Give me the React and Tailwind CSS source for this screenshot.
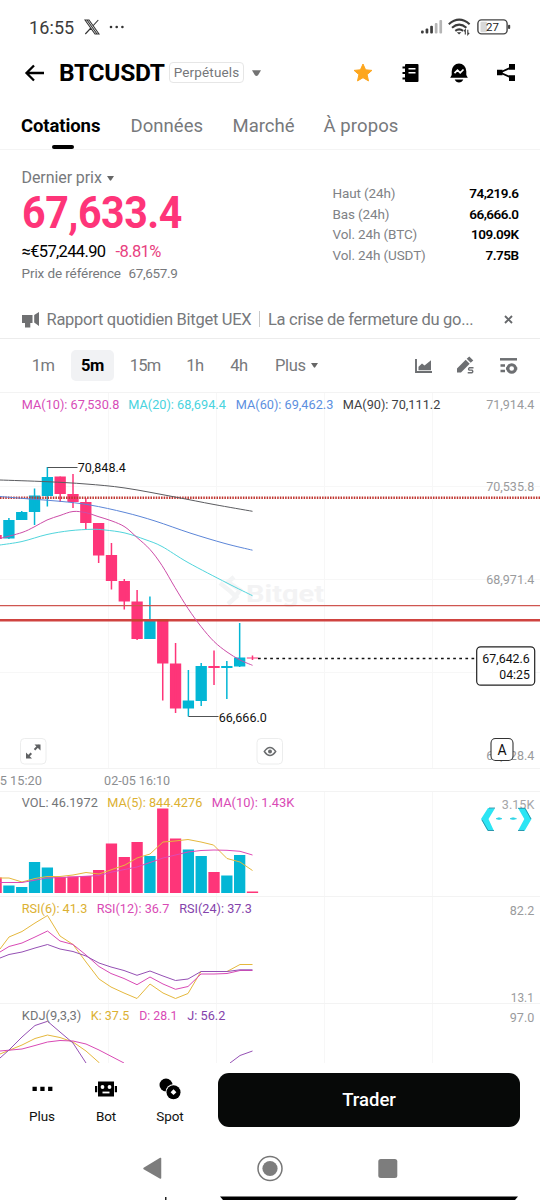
import React from "react";

const PINK = "#fe3579";
const CYAN = "#03b6d5";

// [open/close top, bottom, wick top, wick bottom, rising, volume top]
const candles = [
  [535, 539, 535, 539, 0, 877.5],
  [520, 538.5, 518, 539, 1, 885.5],
  [512, 520, 511, 520, 1, 887],
  [495.5, 512, 488.5, 525, 1, 862],
  [477, 496, 467, 506.5, 1, 867.5],
  [476.5, 494, 476.5, 502, 0, 877],
  [494, 502, 474, 508, 0, 876.5],
  [502, 523, 498, 529, 0, 876],
  [523, 555.5, 523, 563, 0, 870],
  [555, 581, 543, 589.5, 0, 843.5],
  [581, 601.5, 579, 609.5, 0, 857],
  [601.5, 639, 590, 640, 0, 842],
  [620.5, 639, 596.5, 639, 1, 856],
  [620.5, 663.5, 620.5, 700.5, 0, 808.5],
  [663.5, 708.5, 643, 713, 0, 838.5],
  [700.5, 708.5, 670, 716.5, 1, 849.5],
  [666, 701, 663, 706, 1, 856],
  [666, 668, 650.5, 685, 0, 872],
  [666, 668, 661, 699, 1, 875.5],
  [657.5, 666.5, 623, 667, 1, 855],
  [657.5, 658.5, 655.5, 660, 0, 891.5],
];
const cx = (i) => 8.9 + 12.82 * (i - 1);

function smooth(pts) {
  const p = pts.split(" ").map((s) => s.split(",").map(Number));
  let d = `M${p[0]}`;
  for (let i = 0; i < p.length - 1; i++) {
    const a = p[i - 1] || p[i];
    const b = p[i];
    const c = p[i + 1];
    const e = p[i + 2] || c;
    d += `C${b[0] + (c[0] - a[0]) / 6},${b[1] + (c[1] - a[1]) / 6} ${c[0] - (e[0] - b[0]) / 6},${c[1] - (e[1] - b[1]) / 6} ${c}`;
  }
  return d;
}

function Curve({ pts, color }) {
  return <path d={smooth(pts)} fill="none" stroke={color} strokeWidth="1" />;
}
function Line({ pts, color }) {
  return <polyline points={pts} fill="none" stroke={color} strokeWidth="1" strokeLinejoin="round" />;
}
function Label({ x, y, w, color, children, size = 13.5 }) {
  return (
    <text x={x - 0.2} y={y} textLength={w} lengthAdjust="spacingAndGlyphs" fontSize={size} fill={color}>
      {children}
    </text>
  );
}
function Pane({ top, height, children }) {
  return (
    <svg className="block w-full shrink-0" viewBox={`0 ${top} 540 ${height}`} width="540" height={height}>
      <g stroke="#f7f7f7" strokeWidth="1">
        <path d={`M108.5 ${top}v${height}M216.5 ${top}v${height}M324.5 ${top}v${height}M432.5 ${top}v${height}`} />
        <path d={`M0 ${top + 0.5}H540`} stroke="#f3f3f3" />
      </g>
      {children}
    </svg>
  );
}

function StatusBar() {
  return (
    <div className="flex h-[50px] items-center pt-1 pl-[29px] pr-[28px] text-[#3c3c3c]">
      <span className="w-[55px] text-[18px] tracking-[0.1px]">16:55</span>
      <svg width="16" height="16" viewBox="0 0 16 16" fill="none" stroke="#333" strokeWidth="1.1">
        <path d="M1 1h4l10 14h-4zM14.3 1L8.8 7M6.9 9L1.3 15M3 1l10 14" />
      </svg>
      <svg className="ml-[9px]" width="16" height="4" viewBox="0 0 16 4" fill="#333">
        <circle cx="2" cy="2" r="1.3" /><circle cx="7.7" cy="2" r="1.3" /><circle cx="13.4" cy="2" r="1.3" />
      </svg>
      <svg className="ml-auto" width="22" height="14" viewBox="0 0 22 14">
        <g fill="#3c3c3c"><rect x="0" y="10.5" width="2.7" height="3" rx="1" /><rect x="4.6" y="8.5" width="2.7" height="5" rx="1" /><rect x="9.2" y="5.8" width="2.7" height="7.7" rx="1" /></g>
        <g fill="#b5b5b5"><rect x="13.8" y="3" width="2.7" height="10.5" rx="1" /><rect x="18.4" y="0" width="2.7" height="13.5" rx="1" /></g>
      </svg>
      <svg className="ml-[5px]" width="23" height="18" viewBox="0 0 23 18" fill="none" stroke="#3c3c3c" strokeWidth="2.1">
        <path d="M.8 6.2Q11.2-2.8 21.6 6.2M4 9.7q7.2-6 14.4 0M7.3 12.8q3.9-2.8 7.8 0" />
        <path d="M8.8 14.3h4.6l-2.3 2.3z" fill="#3c3c3c" stroke="none" />
        <path d="M17.3 16.5v-4.8l-1.4 1.7M19.8 11.7v4.8l1.4-1.7" strokeWidth="1.1" />
      </svg>
      <svg className="ml-[6px] mr-px" width="34" height="16" viewBox="0 0 34 16">
        <rect x="3.5" y="2.8" width="6.5" height="10.4" rx="1" fill="#d8d8d8" />
        <rect x=".9" y=".9" width="29.2" height="14" rx="3.6" fill="none" stroke="#444" strokeWidth="1.4" />
        <rect x="31" y="5.7" width="2.2" height="4.3" rx="1" fill="#444" />
        <text x="15.5" y="12" textAnchor="middle" fontSize="11.5" fill="#222">27</text>
      </svg>
    </div>
  );
}

function Header() {
  return (
    <div className="flex h-12 items-center pl-6 pr-[23px] pb-[3px]">
      <svg width="21" height="18" viewBox="0 0 21 18" fill="none" stroke="#000" strokeWidth="2.3">
        <path d="M20 9H3M10 1.5L2.5 9l7.5 7.5" />
      </svg>
      <span className="ml-[14px] w-[110px] pt-0.5 text-[24.5px] font-bold leading-none tracking-[-0.3px] text-black">BTCUSDT</span>
      <span className="flex h-[21px] w-[75px] items-center justify-center rounded-[4px] border border-[#e6e6e6] text-[13.5px] tracking-[0.15px] text-[#75777a]">Perpétuels</span>
      <svg className="ml-[8px]" width="9" height="6" viewBox="0 0 9 6" fill="#737373"><path d="M0 .3h9L6.2 5Q4.5 6.8 2.8 5z" /></svg>
      <svg className="ml-auto" width="20" height="20" viewBox="0 0 20 20" fill="#fda61d" stroke="#fda61d" strokeWidth="1" strokeLinejoin="round">
        <path d="M10 1l2.6 5.8 6.3.6-4.8 4.2 1.4 6.3L10 14.7l-5.500 3.2 1.4-6.3L1.1 7.4l6.3-.6z" />
      </svg>
      <svg className="ml-[28px]" width="19" height="20" viewBox="0 0 19 20">
        <rect x="4" y="1" width="13.5" height="18" rx="1" fill="#000" />
        <path d="M1.5 4.5h4M1.5 10h4M1.5 15.5h4" stroke="#000" strokeWidth="2" />
        <path d="M7.5 5.8h7M7.5 9.8h7" stroke="#fff" strokeWidth="1.6" />
      </svg>
      <svg className="ml-[29px]" width="20" height="20" viewBox="0 0 20 20">
        <path d="M2.7 12V8.3a7.3 7.8 0 0 1 14.6 0V12l1.5 2.8H1.2zM5.7 16.6h8.6q-1.3 3-4.3 3t-4.3-3z" fill="#000" />
        <path d="M5.5 10.2l3-3 2.7 2.6 3.3-3.3" fill="none" stroke="#fff" strokeWidth="1.7" />
      </svg>
      <svg className="ml-[27px] mr-px" width="20" height="19" viewBox="0 0 20 19">
        <path d="M16 4L4 9.5 16 15" fill="none" stroke="#000" strokeWidth="1.8" />
        <path d="M1 6.7h5.5v5.5H1zM13 1h6v5.8h-6zM13 12.3h6V18h-6z" fill="#000" />
      </svg>
    </div>
  );
}

function Tabs() {
  return (
    <div className="relative flex h-[52px] border-b border-[#f4f4f4] pl-[21px] pt-[14px] text-[18.5px] leading-[28px] text-[#77797c]">
      <div className="w-[109.5px] font-bold tracking-[-0.1px] text-black">Cotations</div>
      <div className="w-[102px] tracking-[0.05px]">Données</div>
      <div className="w-[91px]">Marché</div>
      <div className="tracking-[0.1px]">À propos</div>
      <div className="absolute bottom-0 left-[52px] h-1 w-[22px] rounded-[2px] bg-black" />
    </div>
  );
}

const stats = [
  ["Haut (24h)", "74,219.6"],
  ["Bas (24h)", "66,666.0"],
  ["Vol. 24h (BTC)", "109.09K"],
  ["Vol. 24h (USDT)", "7.75B"],
];

function PriceBlock() {
  return (
    <div className="flex h-[150px] pl-[21.5px] pr-[21.5px]">
      <div className="flex-1 text-[#77797c]">
        <div className="mt-[18px] flex h-5 items-center gap-[5px] text-[16px] tracking-[-0.08px]">
          Dernier prix
          <svg width="7" height="5" viewBox="0 0 7 5" fill="#666"><path d="M0 0h7L4.2 4.3q-.7.8-1.4 0z" /></svg>
        </div>
        <div className="mt-[6px] h-[38px] origin-left scale-x-[0.935] whitespace-nowrap text-[44px] font-bold leading-[38px] tracking-[-0.5px] text-[#fe3579]">67,633.4</div>
        <div className="mt-[10px] flex h-5 items-center text-[16.5px] text-black">
          <span className="w-[94px] tracking-[-0.65px]">≈€57,244.90</span>
          <span className="tracking-[-0.6px] text-[#e84180]">-8.81%</span>
        </div>
        <div className="mt-px flex h-5 items-center text-[13.5px]">
          <span className="w-[107px] tracking-[-0.1px]">Prix de référence</span>
          <span className="tracking-[-0.35px]">67,657.9</span>
        </div>
      </div>
      <div className="mt-[32.5px] w-[186px]">
        {stats.map(([k, v]) => (
          <div key={k} className="flex h-[20.8px] items-center justify-between text-[13.5px]">
            <span className="tracking-[-0.12px] text-[#808286]">{k}</span>
            <span className="text-[13.5px] font-semibold tracking-[-0.5px] text-black">{v}</span>
          </div>
        ))}
      </div>
    </div>
  );
}

function News() {
  return (
    <div className="flex h-[39px] items-center border-b border-[#ececec] pl-[22px] pt-[2px] text-[16.5px] text-[#77797c]">
      <svg width="18" height="17" viewBox="0 0 18 17" fill="#6f7072">
        <path d="M0 3h10.5v8H8.3v4.5H3V11H0zM12.2 3L17 0v14l-4.8-3.5z" />
      </svg>
      <span className="ml-[6.5px] w-[206px] whitespace-nowrap tracking-[-0.28px]">Rapport quotidien Bitget UEX</span>
      <span className="ml-[6px] mb-0.5 h-4 w-px bg-[#c9c9c9]" />
      <span className="ml-[8.5px] w-[207px] whitespace-nowrap tracking-[-0.28px]">La crise de fermeture du go...</span>
      <svg className="mb-0.5 ml-[29px]" width="9" height="9" viewBox="0 0 9 9" stroke="#66686b" strokeWidth="1.9"><path d="M1 1l7 7M8 1L1 8" /></svg>
    </div>
  );
}

function Timeframes() {
  return (
    <div className="flex h-[53px] items-center pl-[21px] text-[16.5px] text-[#77797c]">
      <span className="w-[44px] pt-[2px] text-center tracking-[-0.5px]">1m</span>
      <span className="ml-[6px] flex h-[31px] w-[43px] items-center justify-center rounded-[5px] bg-[#f1f2f4] pt-0.5 font-bold tracking-[-0.4px] text-black">5m</span>
      <span className="ml-[8px] w-[46px] pt-[2px] text-center tracking-[-0.8px]">15m</span>
      <span className="ml-[11px] w-[32px] pt-[2px] text-center tracking-[-0.4px]">1h</span>
      <span className="ml-[12px] w-[32px] pt-[2px] text-center tracking-[-0.4px]">4h</span>
      <span className="ml-[20px] w-[31px] pt-[2px] tracking-[-0.3px]">Plus</span>
      <svg className="ml-[5px]" width="7" height="5" viewBox="0 0 7 5" fill="#666"><path d="M0 0h7L4.2 4.3q-.7.8-1.4 0z" /></svg>
      <svg className="ml-[97px]" width="18" height="16" viewBox="0 0 18 16" fill="#6d6f72">
        <path d="M1 1v13h16" fill="none" stroke="#6d6f72" strokeWidth="1.9" />
        <path d="M3.5 12.3V8.8L7 5.5 9.5 7.5 16 2.2v10.1z" />
      </svg>
      <svg className="ml-[23px]" width="20" height="19" viewBox="0 0 20 19" fill="#6d6f72">
        <path d="M1 12.5L9.700 3.8l4 4L5 16.5H1zM10.7 2.8L13.3.4l4 4-2.6 2.4z" />
        <path d="M17.5 11.7h-4.2q-1.5 1.3 0 2.4h2.7q1.6 1.3 0 2.6h-4.3" fill="none" stroke="#6d6f72" strokeWidth="1.4" />
      </svg>
      <svg className="ml-[23px]" width="19" height="18" viewBox="0 0 19 18" fill="none" stroke="#6d6f72">
        <path d="M1 2.3h17" strokeWidth="2.5" /><path d="M1.5 8.5H6M1.5 14H6" strokeWidth="2.3" />
        <circle cx="12.7" cy="11.5" r="3.8" strokeWidth="3" /><path d="M7 11.5h1.5M17 11.5h1.3" strokeWidth="2.6" />
      </svg>
    </div>
  );
}

function MainChart() {
  return (
    <Pane top={392} height={376}>
      <path d="M0 486.5H540M0 579.5H540M0 672.5H540" stroke="#f7f7f7" />
      <g stroke="#f3f4f5" fill="none" strokeWidth="4.5"><path d="M220 583l10 8 6 6-8 7M234 577l-6 5 12 8-6 8" /></g>
      <text x="246" y="602" textLength="78" lengthAdjust="spacingAndGlyphs" fontSize="24" fontWeight="bold" fill="#f3f3f4">Bitget</text>
      {candles.map(([a, b, c, d, up], i) => (
        <g key={i} fill={up ? CYAN : PINK}>
          <rect x={cx(i) - 5.65} y={a} width="11.3" height={b - a} />
          <rect x={cx(i) - 0.75} y={c} width="1.5" height={d - c} />
        </g>
      ))}
      <path d="M0 497.7H540" stroke="#c03630" strokeWidth="2.4" strokeDasharray="1.5 1.14" />
      <path d="M0 605.7H540" stroke="#cf5650" strokeWidth="1.2" />
      <path d="M0 620.2H540" stroke="#cf4340" strokeWidth="2.5" />
      <path d="M132 620.2h10.5M157.5 620.2h11" stroke="#c8442d" strokeWidth="2" />
      <Curve color="#5b5c60" pts="0,480 47,481.7 86,484 125,488 175,497 214,504.5 252.5,511.3" />
      <Curve color="#5c86d8" pts="0,496.5 30,499 60,501.3 90,505 125,512.5 155,521 190,533 225,543.5 252.5,550.2" />
      <Curve color="#50d5dc" pts="0,545 22,541.5 47,534.5 70,530.7 92,529.3 105,530 125,533 145,539.5 162,546.5 188,562.5 227,583 252.5,595.7" />
      <Curve color="#cd4da8" pts="0,538.5 22,532.5 34,527 47,520 60,515.5 73,511.5 86,512.7 98,516.5 112,521 125,527 137,537.5 150,549.5 162,565.5 175,587.5 188,608.5 201,626.5 214,641.5 227,652 240,660 252.5,665.3" />
      <path d="M47.5 467.5H77.5M188.5 716.5H218.5" stroke="#505254" />
      <Label x={78} y={472} w={48} color="#111">70,848.4</Label>
      <Label x={219} y={721.5} w={48} color="#111">66,666.0</Label>
      <path d="M258 658.5H475" stroke="#111" strokeWidth="1.5" strokeDasharray="2.7 3.4" />
      <Label x={22} y={409} w={97.5} color="#d74cb7">MA(10): 67,530.8</Label>
      <Label x={128.5} y={409} w={97.5} color="#49d3de">MA(20): 68,694.4</Label>
      <Label x={236} y={409} w={97.5} color="#5c8fe0">MA(60): 69,462.3</Label>
      <Label x={343} y={409} w={97.5} color="#3e4044">MA(90): 70,111.2</Label>
      <Label x={486.5} y={409} w={48} color="#9a9b9d">71,914.4</Label>
      <Label x={486.5} y={491} w={48} color="#9a9b9d">70,535.8</Label>
      <Label x={486.5} y={584} w={48} color="#9a9b9d">68,971.4</Label>
      <Label x={486.5} y={759.5} w={48} color="#9a9b9d">66,028.4</Label>
      <rect x="476.7" y="646.8" width="58" height="38.4" rx="4" fill="#fff" stroke="#222" strokeWidth="1.2" />
      <Label x={482.5} y={663} w={47.5} color="#111">67,642.6</Label>
      <Label x={499.5} y={679.3} w={30.5} color="#111">04:25</Label>
      <rect x="491" y="738.5" width="22" height="22" rx="4.5" fill="#fff" stroke="#333" strokeWidth="1.1" />
      <text x="502" y="755" textAnchor="middle" fontSize="14" fill="#111">A</text>
      <rect x="20.5" y="738.5" width="25.5" height="25.5" rx="4" fill="#fff" stroke="#eceded" />
      <path d="M34.5 749.7l4.5-4.5M31.3 753.3l-4 4" stroke="#5f6163" strokeWidth="2" />
      <path d="M34.5 744.5h6v6zM26 752.5v6h6z" fill="#5f6163" />
      <rect x="257" y="738.5" width="25.5" height="25.5" rx="4" fill="#fff" stroke="#eceded" />
      <path d="M264.3 751.5q5.6-8 11.4 0-5.8 8-11.4 0z" fill="none" stroke="#6a6c6e" strokeWidth="1.4" />
      <circle cx="270" cy="751.5" r="2" fill="#6a6c6e" />
    </Pane>
  );
}

function TimeAxis() {
  return (
    <div className="h-[23px] shrink-0 border-t border-[#f3f3f3]">
      <svg className="block" width="540" height="22" viewBox="0 769 540 22">
        <Label x={0} y={784.7} w={42} color="#8c8e91">5 15:20</Label>
        <Label x={104.3} y={784.7} w={66} color="#8c8e91">02-05 16:10</Label>
      </svg>
    </div>
  );
}

function Volume() {
  return (
    <Pane top={791} height={105}>
      {candles.map((c, i) => (
        <rect key={i} x={cx(i) - 5.65} y={c[5]} width="11.3" height={893 - c[5]} fill={c[4] ? CYAN : PINK} />
      ))}
      <Line color="#e5b83d" pts="0,878 9,878 22,882 35,878.5 47,876.5 60,876.5 73,875 86,872.5 99,874 125,865 137,858 150,854 163,842 175,841 188,839.5 201,842 213.5,845 227,858.5 240,862 252.5,870.5" />
      <Line color="#df49b6" pts="0,882.5 22,882.5 47,878 73,877 99,875.5 112,872 137,867 163,858 188,852 201,850.5 214,850 227,850.3 240,851.3 252.5,855" />
      <Label x={22} y={807} w={76} color="#737578">VOL: 46.1972</Label>
      <Label x={107.5} y={807} w={95} color="#dcb132">MA(5): 844.4276</Label>
      <Label x={212} y={807} w={82.5} color="#d94ab5">MA(10): 1.43K</Label>
      <Label x={502} y={809} w={32.5} color="#a4a5a7">3.15K</Label>
      <path d="M488 808l7 .3-6.5 10.7 5.5 12-6.5-.3-6.5-11.7z" fill="#2ce5f4" />
      <path d="M518 808l7.5.2 6 10.8-7 12-6.5-.3 6.3-11.7z" fill="#2ce5f4" />
      <path d="M489 808h6M482 820l6 10.5h6M518 808.3h7l6 10.7M518 830.5h6" fill="none" stroke="#27849a" strokeWidth=".8" />
      <path d="M496 818.7q3-2 6 0-3 1.6-6 0zM510 818.7q3-2 6.5 0-3.5 1.6-6.5 0z" fill="#31d4e6" stroke="#31d4e6" strokeWidth=".7" />
    </Pane>
  );
}

function Rsi() {
  return (
    <Pane top={896} height={107}>
      <Line color="#e5b83d" pts="0,949 9,937 22,931.5 35,923 47.5,915.5 60,936 73,944.5 86,962 99,979 111,987 124,993 137,998.5 150,984 163,993 175.5,998.5 188,993.5 201,971.5 227,971.5 240,964.5 252.5,964.5" />
      <Line color="#d94ab5" pts="0,952 9,946.5 22,943 35,937 47.5,931 60,941 73,944.5 86,955 99,966.5 111,973.5 124,978.5 137,984.7 150,977 163,984 175.5,989.3 188,986.5 201,974 214,974 227,973.5 240,970.5 252.5,970.5" />
      <Line color="#9550b4" pts="0,958 9,954.5 22,952 35,948 47.5,944.5 60,949 73,951.5 86,956 99,963 111,967 124,970.5 137,975.3 150,971 163,976 175.5,980.5 188,979 201,971.5 227,971.5 240,969.8 252.5,969.8" />
      <Label x={22} y={913} w={65.5} color="#dcb132">RSI(6): 41.3</Label>
      <Label x={97} y={913} w={72.5} color="#d94ab5">RSI(12): 36.7</Label>
      <Label x={179.5} y={913} w={72.5} color="#8443ab">RSI(24): 37.3</Label>
      <Label x={510} y={915} w={24.5} color="#9a9b9d">82.2</Label>
      <Label x={511} y={1002} w={23} color="#9a9b9d" size={13}>13.1</Label>
    </Pane>
  );
}

function Kdj() {
  return (
    <Pane top={1003} height={60}>
      <Line color="#e5b83d" pts="0,1054 22,1045 35,1038.5 47.5,1035 60,1037.5 73,1042 86,1051 99.5,1063" />
      <Line color="#d94ab5" pts="0,1051 22,1049 35,1045.5 47.5,1042 60,1040.5 73,1041 86,1044 99,1050 124,1063" />
      <Line color="#9550b4" pts="0,1058 9,1050 22,1037 35,1025.5 47.5,1021.3 60,1032 73,1043 86,1063" />
      <Line color="#9550b4" pts="230,1063 240,1055.5 252.5,1051" />
      <Label x={22} y={1019.5} w={59.5} color="#737578">KDJ(9,3,3)</Label>
      <Label x={91} y={1019.5} w={38.5} color="#dcb132">K: 37.5</Label>
      <Label x={139.5} y={1019.5} w={38} color="#d94ab5">D: 28.1</Label>
      <Label x={187.5} y={1019.5} w={38} color="#8443ab">J: 56.2</Label>
      <Label x={510} y={1021.5} w={24.5} color="#9a9b9d">97.0</Label>
    </Pane>
  );
}

function BottomItem({ label, children }) {
  return (
    <div className="flex w-16 flex-col items-center">
      <svg width="24" height="24" viewBox="0 0 24 24">{children}</svg>
      <span className="mt-[6px] text-[13.5px] leading-[18px] tracking-[-0.1px] text-[#111]">{label}</span>
    </div>
  );
}

function BottomBar() {
  return (
    <div className="flex h-[77px] pl-[10px] pr-5 pt-[10px]">
      <div className="flex pt-[4px]">
        <BottomItem label="Plus">
          <path d="M2.5 9.8h4.3v4.3H2.5zM10.3 9.8h4.3v4.3h-4.3zM18.1 9.8h4.3v4.3h-4.3z" fill="#000" />
        </BottomItem>
        <BottomItem label="Bot">
          <path d="M4 4.500h16v15H4zM1 9h2.2v6.2H1zM20.8 9H23v6.2h-2.2z" fill="#000" />
          <circle cx="8.5" cy="10" r="1.9" fill="#fff" /><circle cx="15.5" cy="10" r="1.9" fill="#fff" />
          <path d="M8.5 15.5h7" stroke="#fff" strokeWidth="1.8" />
        </BottomItem>
        <BottomItem label="Spot">
          <circle cx="8" cy="8" r="6.5" fill="#000" />
          <circle cx="15.5" cy="15.2" r="8" fill="#fff" /><circle cx="15.5" cy="15.2" r="7" fill="#000" />
          <path d="M15.5 12.3l2.9 2.9-2.9 2.9-2.9-2.9z" fill="#fff" />
        </BottomItem>
      </div>
      <button className="ml-4 h-[54px] flex-1 rounded-[11px] bg-[#070908] pt-0.5 text-[18.5px] font-medium text-white">Trader</button>
    </div>
  );
}

function SystemNav() {
  return (
    <div className="h-[60px]">
      <svg className="block" width="540" height="60" viewBox="0 1140 540 60">
        <path d="M160.5 1158.5v19.5l-16.5-9.5z" fill="#7d7d7d" stroke="#7d7d7d" strokeWidth="1.5" strokeLinejoin="round" />
        <circle cx="270" cy="1168.5" r="12" fill="none" stroke="#777" strokeWidth="1.5" />
        <circle cx="270" cy="1168.5" r="7.6" fill="#7d7d7d" />
        <rect x="378.3" y="1159" width="19" height="19" rx="2.5" fill="#7d7d7d" />
        <path d="M220 1196.5H518l-3 3.5H223z" fill="#000" />
        <path d="M165 1197h1.5v3H165z" fill="#222" />
      </svg>
    </div>
  );
}

export default function App() {
  return (
    <div className="flex h-[1200px] w-[540px] flex-col overflow-hidden bg-white font-[Roboto,sans-serif]">
      <StatusBar />
      <Header />
      <Tabs />
      <PriceBlock />
      <News />
      <Timeframes />
      <MainChart />
      <TimeAxis />
      <Volume />
      <Rsi />
      <Kdj />
      <BottomBar />
      <SystemNav />
    </div>
  );
}
